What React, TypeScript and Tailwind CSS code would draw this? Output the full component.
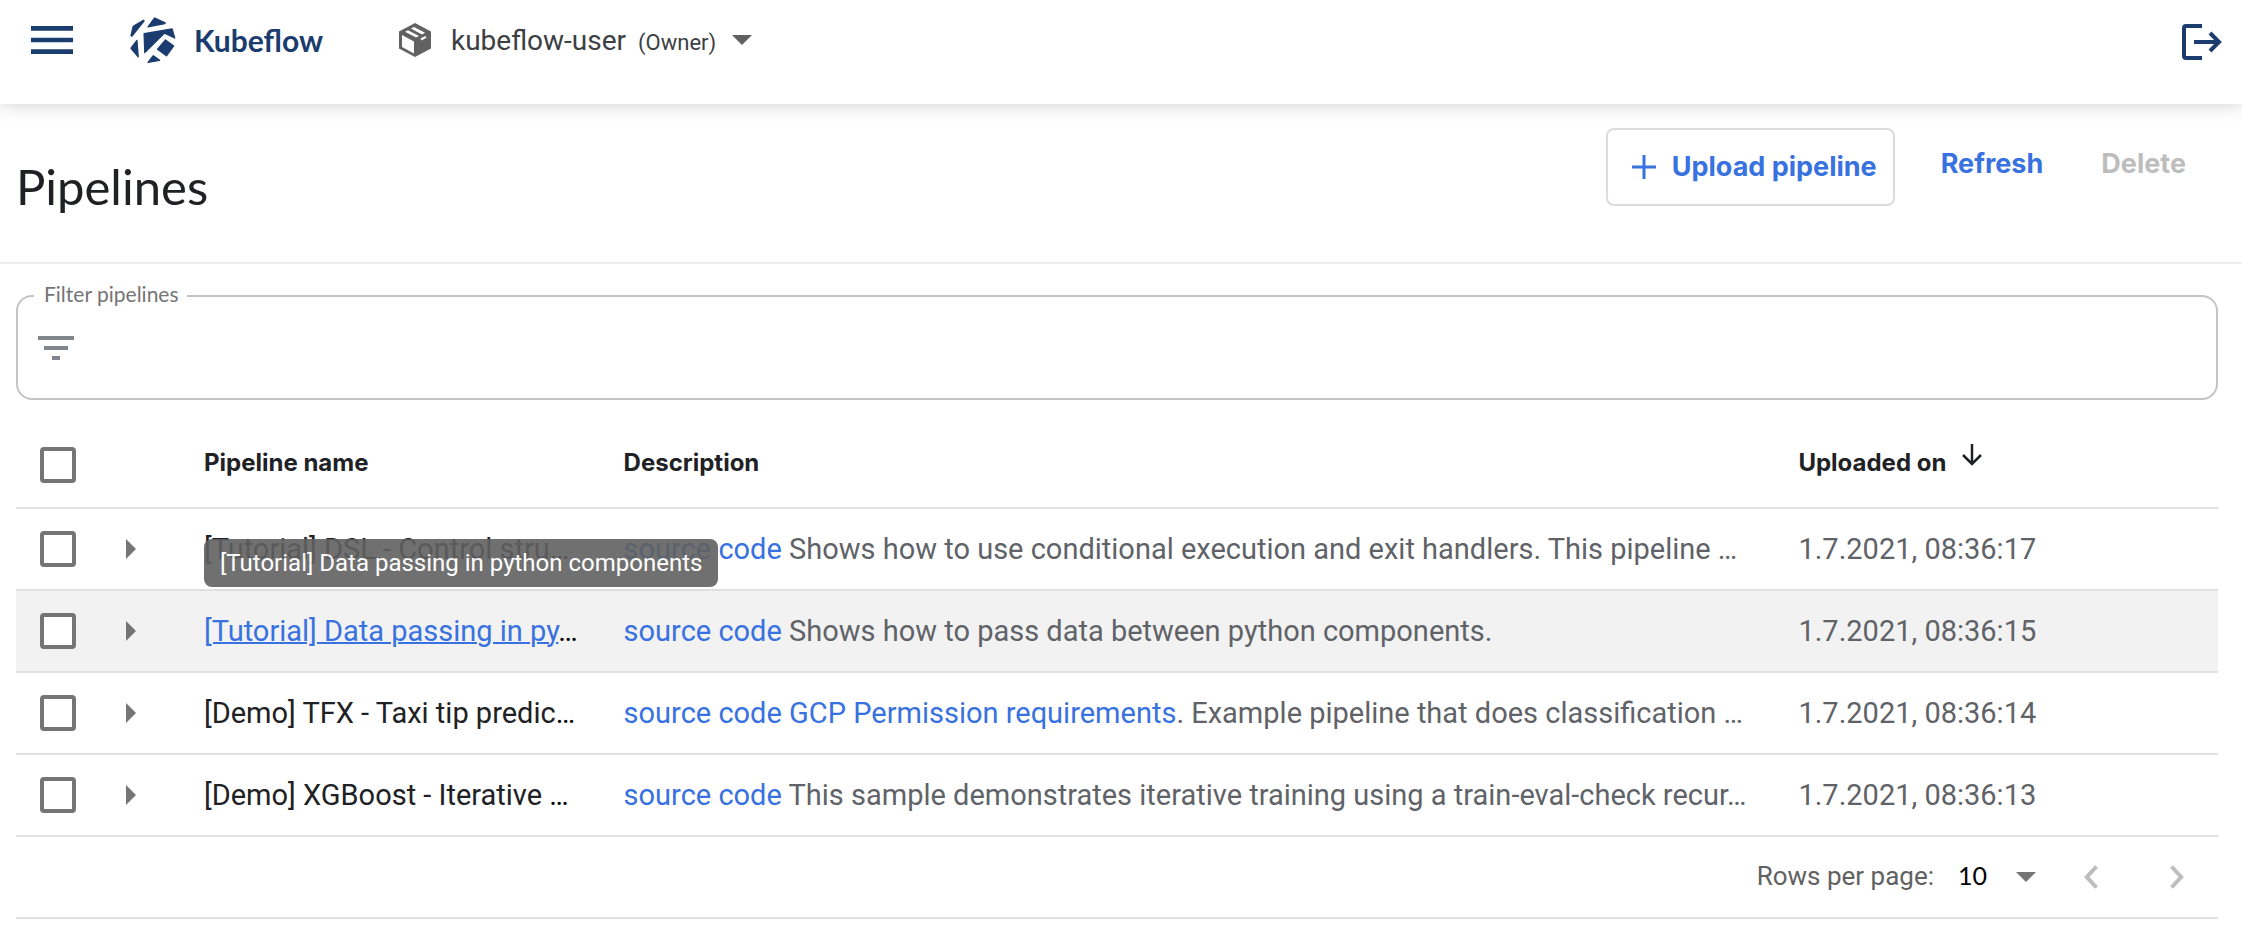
import React from 'react';

type Pipeline = {
  id: string;
  name: string;
  tooltip?: string;
  description: React.ReactNode;
  uploadedOn: string;
};

const SourceLink = ({ children }: { children: React.ReactNode }) => (
  <a href="#source" className="text-[#3871e0]">
    {children}
  </a>
);

const pipelines: Pipeline[] = [
  {
    id: 'control-structures',
    name: '[Tutorial] DSL - Control stru',
    description: (
      <>
        <SourceLink>source code</SourceLink> Shows how to use conditional execution and exit handlers. This pipeline …
      </>
    ),
    uploadedOn: '1.7.2021, 08:36:17',
  },
  {
    id: 'data-passing',
    name: '[Tutorial] Data passing in py',
    tooltip: '[Tutorial] Data passing in python components',
    description: (
      <>
        <SourceLink>source code</SourceLink> Shows how to pass data between python components.
      </>
    ),
    uploadedOn: '1.7.2021, 08:36:15',
  },
  {
    id: 'tfx-taxi',
    name: '[Demo] TFX - Taxi tip predic',
    description: (
      <>
        <SourceLink>source code</SourceLink> <SourceLink>GCP Permission requirements</SourceLink>. Example pipeline
        that does classification …
      </>
    ),
    uploadedOn: '1.7.2021, 08:36:14',
  },
  {
    id: 'xgboost',
    name: '[Demo] XGBoost - Iterative ',
    description: (
      <>
        <SourceLink>source code</SourceLink> This sample demonstrates iterative training using a train-eval-check
        recur…
      </>
    ),
    uploadedOn: '1.7.2021, 08:36:13',
  },
];

const rowGrid =
  'grid grid-cols-[62px_126px_minmax(0,1fr)_minmax(0,2.8fr)_minmax(0,1fr)] items-center border-b-2 border-[#e0e0e0]';

const checkbox =
  'block size-9 appearance-none rounded-[4px] border-4 border-[#757575] bg-white checked:bg-[#757575]';

function KubeflowLogo() {
  return (
    <svg
      viewBox="0 0 140 140"
      className="size-[46px] fill-[#1a3c6e] stroke-[#1a3c6e]"
      strokeWidth="4"
      strokeLinejoin="round"
      aria-hidden="true"
    >
      <path d="M3 57 10 28 41 10 43 12 6 58Z" />
      <path d="M55 30 75 3 107 18 106 20Z" />
      <path d="M43 51 128 36 136 64 105 49 45 108Z" />
      <path d="M108 70 133 88 111 118 84 98Z" />
      <path d="M71 118 90 132 55 138Z" />
      <path d="M3 95 21 71 25 121Z" />
    </svg>
  );
}

function Header() {
  return (
    <header className="relative z-10 h-26 bg-white shadow-[0_0_18px_rgba(0,0,0,0.2)]">
      <div className="flex h-20 items-center pr-5 pl-6">
        <button type="button" aria-label="Menu" className="text-[#1a3c6e]">
          <svg viewBox="0 0 24 24" className="size-14 fill-current">
            <path d="M3 18h18v-2H3v2zm0-5h18v-2H3v2zm0-7v2h18V6H3z" />
          </svg>
        </button>
        <a href="#home" className="ml-[50px] flex items-center gap-[18px] text-[#1a3c6e]">
          <KubeflowLogo />
          <span className="text-[30px] leading-9 font-bold">Kubeflow</span>
        </a>
        <button type="button" className="ml-19 flex items-center font-[Roboto] text-[#3c4043]">
          <svg viewBox="0 0 32 34" className="mr-5 h-[34px] w-8" aria-hidden="true">
            <path d="M16 0 32 8.5v17L16 34 0 25.5v-17Z" fill="#616161" />
            <path d="M3 12v12l12 6.5V18.5Z" fill="#fff" />
            <path d="M6 8.8 9 7.2 20 13l-3 1.6ZM12 5.6l3-1.6 11 5.8-3 1.6Z" fill="#fff" />
            <path d="m22 16.5 5-2.7" stroke="#fff" strokeWidth="2" />
          </svg>
          <span className="pt-0.5 text-[28px] leading-9">kubeflow-user</span>
          <span className="pt-1.5 pl-3 text-[22px] leading-9">(Owner)</span>
          <svg viewBox="0 0 20 10" className="ml-4 h-2.5 w-5 fill-[#616161]" aria-hidden="true">
            <path d="M0 0h20L10 10Z" />
          </svg>
        </button>
        <button type="button" aria-label="Log out" className="ml-auto pt-1 text-[#1a3c6e]">
          <svg
            viewBox="0 0 40 36"
            className="h-9 w-10"
            fill="none"
            stroke="currentColor"
            strokeWidth="4"
            aria-hidden="true"
          >
            <path d="M20 2H4Q2 2 2 4v28q0 2 2 2h16M12 18h25M28 9l9 9-9 9" />
          </svg>
        </button>
      </div>
    </header>
  );
}

function Toolbar() {
  return (
    <div className="flex h-40 items-start justify-between border-b-2 border-[#eeeeee] pt-6 pr-14 pl-4">
      <h1 className="pt-7 text-[49px] leading-[60px] text-[#202124]">Pipelines</h1>
      <div className="flex items-start font-[Inter] text-[27px] leading-9 font-bold text-[#3871e0]">
        <button
          type="button"
          className="flex h-[78px] items-center gap-4 rounded-lg border-2 border-[#dadce0] pr-4 pl-6"
        >
          <svg viewBox="0 0 24 24" className="size-6" stroke="currentColor" strokeWidth="3" aria-hidden="true">
            <path d="M12 0v24M0 12h24" />
          </svg>
          Upload pipeline
        </button>
        <button type="button" className="ml-[46px] h-[72px]">
          Refresh
        </button>
        <button type="button" disabled className="ml-[58px] h-[72px] text-[#bdbdbd]">
          Delete
        </button>
      </div>
    </div>
  );
}

function FilterBox() {
  return (
    <fieldset className="mt-[18px] rounded-2xl border-2 border-[#c4c4c4] px-3.5 pb-[26px]">
      <legend className="ml-0.5 pr-2 pb-1 pl-2.5 text-[21px] leading-6 text-[#757575]">
        <label htmlFor="filter">Filter pipelines</label>
      </legend>
      <div className="flex items-center gap-2 pt-3.5">
        <svg viewBox="0 0 24 24" className="size-12 fill-[#80868b]" aria-hidden="true">
          <path d="M10 18h4v-2h-4v2zM3 6v2h18V6H3zm3 7h12v-2H6v2z" />
        </svg>
        <input id="filter" type="text" className="h-12 flex-1 bg-transparent text-[28px] outline-none" />
      </div>
    </fieldset>
  );
}

function PipelineTable() {
  return (
    <table className="mt-[23px] block">
      <thead className="block">
        <tr className={`${rowGrid} h-[86px] text-left font-[Inter] text-[24px] leading-8 text-[#202124]`}>
          <th className="pl-6">
            <input type="checkbox" aria-label="Select all pipelines" className={checkbox} />
          </th>
          <td />
          <th className="pb-1 font-bold">Pipeline name</th>
          <th className="pb-1 font-bold">Description</th>
          <th className="flex items-center gap-4 pb-1 font-bold">
            Uploaded on
            <svg
              viewBox="0 0 20 22"
              className="mb-4 h-[22px] w-5"
              fill="none"
              stroke="currentColor"
              strokeWidth="2.5"
              aria-hidden="true"
            >
              <path d="M10 0v20M1 11l9 9 9-9" />
            </svg>
          </th>
        </tr>
      </thead>
      <tbody className="block font-[Roboto] text-[29px] leading-9 text-[#5f6368]">
        {pipelines.map((pipeline) => (
          <tr key={pipeline.id} className={`${rowGrid} h-[82px] ${pipeline.tooltip ? 'bg-[#f2f2f2]' : 'bg-white'}`}>
            <td className="pl-6">
              <input type="checkbox" aria-label={`Select ${pipeline.id}`} className={checkbox} />
            </td>
            <td className="pl-12">
              <button type="button" aria-label={`Expand ${pipeline.id}`} className="block">
                <svg viewBox="0 0 10 20" className="h-5 w-2.5 fill-[#757575]">
                  <path d="M0 0v20L10 10Z" />
                </svg>
              </button>
            </td>
            <td className="relative flex h-full items-center pr-6">
              <div className="truncate text-black">
                <a
                  href="#pipeline"
                  className={pipeline.tooltip ? 'text-[#3871e0] underline decoration-2' : 'text-[#202124]'}
                >
                  {pipeline.name}
                </a>
                …
              </div>
              {pipeline.tooltip && (
                <div
                  role="tooltip"
                  className="absolute bottom-full left-0 z-10 mb-1 rounded-lg bg-[#616161] px-4 py-2 text-[24px] leading-8 whitespace-nowrap text-white opacity-90"
                >
                  {pipeline.tooltip}
                </div>
              )}
            </td>
            <td className="truncate pr-6">{pipeline.description}</td>
            <td>{pipeline.uploadedOn}</td>
          </tr>
        ))}
      </tbody>
    </table>
  );
}

function Pagination() {
  return (
    <div className="flex h-[82px] items-center justify-end border-b-2 border-[#e0e0e0] pr-[34px]">
      <label htmlFor="rows" className="mr-6 pb-0.5 font-[Roboto] text-[26px] leading-8 text-[#616161]">
        Rows per page:
      </label>
      <div className="grid items-center">
        <select
          id="rows"
          className="col-start-1 row-start-1 w-[78px] appearance-none bg-transparent pb-1 text-[25px] leading-8 text-black"
        >
          <option>10</option>
        </select>
        <svg
          viewBox="0 0 20 10"
          className="pointer-events-none col-start-1 row-start-1 h-2.5 w-5 justify-self-end fill-[#757575]"
          aria-hidden="true"
        >
          <path d="M0 0h20L10 10Z" />
        </svg>
      </div>
      <button type="button" disabled aria-label="Previous page" className="ml-12 text-[#bdbdbd]">
        <svg viewBox="0 0 14 24" className="h-6 w-3.5" fill="none" stroke="currentColor" strokeWidth="4">
          <path d="M12.5 1.5 2.8 12l9.7 10.5" />
        </svg>
      </button>
      <button type="button" disabled aria-label="Next page" className="ml-[72px] text-[#bdbdbd]">
        <svg viewBox="0 0 14 24" className="h-6 w-3.5" fill="none" stroke="currentColor" strokeWidth="4">
          <path d="M1.5 1.5 11.2 12 1.5 22.5" />
        </svg>
      </button>
    </div>
  );
}

export default function App() {
  return (
    <div className="min-h-screen bg-white font-[Lato,sans-serif]">
      <Header />
      <Toolbar />
      <main className="pr-6 pl-4">
        <FilterBox />
        <PipelineTable />
        <Pagination />
      </main>
    </div>
  );
}
